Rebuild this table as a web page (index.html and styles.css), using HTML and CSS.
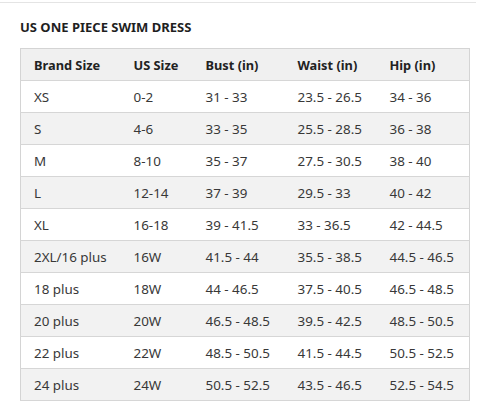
FILE: index.html
```html
<!DOCTYPE html>
<html>
<head>
<meta charset="utf-8">
<link rel="stylesheet" href="styles.css">
</head>
<body>
<div class="page">
  <div class="topline"></div>
  <h1 class="title">US ONE PIECE SWIM DRESS</h1>
  <table class="chart">
    <colgroup>
      <col class="c1"><col class="c2"><col class="c3"><col class="c4"><col class="c5">
    </colgroup>
    <thead>
      <tr><th>Brand Size</th><th>US Size</th><th>Bust (in)</th><th>Waist (in)</th><th>Hip (in)</th></tr>
    </thead>
    <tbody>
      <tr><td>XS</td><td>0-2</td><td>31 - 33</td><td>23.5 - 26.5</td><td>34 - 36</td></tr>
      <tr><td>S</td><td>4-6</td><td>33 - 35</td><td>25.5 - 28.5</td><td>36 - 38</td></tr>
      <tr><td>M</td><td>8-10</td><td>35 - 37</td><td>27.5 - 30.5</td><td>38 - 40</td></tr>
      <tr><td>L</td><td>12-14</td><td>37 - 39</td><td>29.5 - 33</td><td>40 - 42</td></tr>
      <tr><td>XL</td><td>16-18</td><td>39 - 41.5</td><td>33 - 36.5</td><td>42 - 44.5</td></tr>
      <tr><td>2XL/16 plus</td><td>16W</td><td>41.5 - 44</td><td>35.5 - 38.5</td><td>44.5 - 46.5</td></tr>
      <tr><td>18 plus</td><td>18W</td><td>44 - 46.5</td><td>37.5 - 40.5</td><td>46.5 - 48.5</td></tr>
      <tr><td>20 plus</td><td>20W</td><td>46.5 - 48.5</td><td>39.5 - 42.5</td><td>48.5 - 50.5</td></tr>
      <tr><td>22 plus</td><td>22W</td><td>48.5 - 50.5</td><td>41.5 - 44.5</td><td>50.5 - 52.5</td></tr>
      <tr><td>24 plus</td><td>24W</td><td>50.5 - 52.5</td><td>43.5 - 46.5</td><td>52.5 - 54.5</td></tr>
    </tbody>
  </table>
</div>
</body>
</html>
```

FILE: styles.css
```css
html, body {
  margin: 0;
  padding: 0;
  background: #ffffff;
}
.page {
  width: 488px;
  height: 404px;
  font-family: "Noto Sans", "Open Sans", sans-serif;
  color: #333333;
  overflow: hidden;
}
.topline {
  margin: 2px 12px 0 0;
  height: 1px;
  background: #e4e4e4;
}
.title {
  margin: 14px 0 0 20px;
  font-size: 13px;
  font-weight: 700;
  line-height: 20px;
  color: #1f1f1f;
  letter-spacing: 0;
}
.chart {
  margin: 11px 0 0 20px;
  border-collapse: collapse;
  table-layout: fixed;
  width: 449px;
  border: 1px solid #d4d4d4;
  border-bottom: 1px solid #dcdcdc;
}
.c1 { width: 100px; }
.c2 { width: 72px; }
.c3 { width: 92px; }
.c4 { width: 92px; }
.c5 { width: 93px; }
.chart th, .chart td {
  height: 31px;
  padding: 0 0 0 13px;
  text-align: left;
  white-space: nowrap;
  border-bottom: 1px solid #d6d6d6;
}
.chart th {
  background: #f0f0f0;
  font-size: 12.8px;
  font-weight: 700;
  color: #222222;
}
.chart td {
  font-size: 13.4px;
  color: #383838;
}
.chart tbody tr:nth-child(even) td {
  background: #f2f2f2;
}
```
